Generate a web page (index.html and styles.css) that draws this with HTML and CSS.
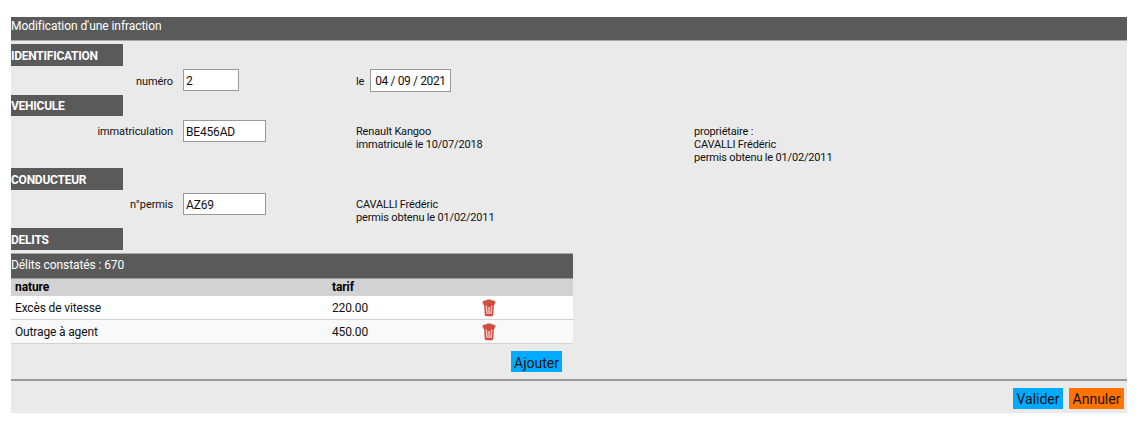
FILE: index.html
```
<!DOCTYPE html>
<html lang="fr">
<head>
<meta charset="utf-8">
<title>Modification d'une infraction</title>
<link rel="stylesheet" href="styles.css">
</head>
<body>
<svg class="defs" width="0" height="0">
  <symbol id="trash" viewBox="0 0 14 18">
    <path d="M1.500 4h11v2h-.6l-.6 9.500q-.1 1.700-1.600 1.700H4.300q-1.500 0-1.600-1.700L2.100 6h-.6z" fill="#d8493c"/>
    <path d="M4.400 1.200Q4.800.4 6 .4h2q1.200 0 1.600.8l2.700.5q1.100.3 1.300 2.700H.4Q.6 2 1.700 1.700z" fill="#c8553f"/>
    <path d="M4.300 6.500l.7 8.500M7 8v7M9.700 6.500L9 15" stroke="#f6d5d2" stroke-width="1.300" fill="none"/>
  </symbol>
</svg>
<form class="panel">
  <header class="title">Modification d'une infraction</header>

  <h2 class="section">IDENTIFICATION</h2>
  <div class="row row-id">
    <label class="label">numéro</label>
    <div class="cell"><span class="input short">2</span></div>
    <div class="info date-cell"><span>le</span><span class="input date">04 / 09 / 2021</span></div>
  </div>

  <h2 class="section section-car">VEHICULE</h2>
  <div class="row row-car">
    <label class="label">immatriculation</label>
    <div class="cell"><span class="input">BE456AD</span></div>
    <div class="info">Renault Kangoo<br>immatriculé le 10/07/2018</div>
    <div class="info">propriétaire :<br>CAVALLI Frédéric<br>permis obtenu le 01/02/2011</div>
  </div>

  <h2 class="section">CONDUCTEUR</h2>
  <div class="row row-driver">
    <label class="label">n°permis</label>
    <div class="cell"><span class="input">AZ69</span></div>
    <div class="info">CAVALLI Frédéric<br>permis obtenu le 01/02/2011</div>
  </div>

  <h2 class="section">DELITS</h2>
  <div class="offences">
    <div class="caption">Délits constatés : 670</div>
    <div class="line head"><span>nature</span><span>tarif</span></div>
    <div class="line"><span>Excès de vitesse</span><span>220.00</span><svg class="trash"><use href="#trash"/></svg></div>
    <div class="line alt"><span>Outrage à agent</span><span>450.00</span><svg class="trash"><use href="#trash"/></svg></div>
    <div class="add"><span class="button">Ajouter</span></div>
  </div>

  <footer class="actions"><span class="button validate">Valider</span><span class="button cancel">Annuler</span></footer>
</form>
</body>
</html>
```
FILE: styles.css
```
* { box-sizing: border-box; }
body {
  margin: 0;
  padding: 17px 18px 0 11px;
  background: #fff;
  color: #111;
  font-family: Roboto, "Liberation Sans", sans-serif;
  font-size: 11px;
  letter-spacing: -0.17px;
}
.defs { display: block; height: 0; }
.panel { height: 396px; background: #eaeaea; }
.title {
  height: 24px;
  margin-bottom: 3px;
  border-bottom: 1px solid #aaa;
  background: #5a5a5a;
  color: #fff;
  font-size: 12px;
  letter-spacing: -0.06px;
  line-height: 18px;
}
.section {
  width: 112px;
  height: 22px;
  margin: 0;
  background: #5a5a5a;
  color: #fff;
  font-size: 12px;
  font-weight: 700;
  letter-spacing: -0.25px;
  line-height: 24px;
}
.section-car { height: 21px; line-height: 22px; }
.row {
  display: grid;
  grid-template-columns: 162px 183px 338px 1fr;
  padding-top: 3px;
}
.row-id { height: 29px; }
.row-car { height: 52px; padding-top: 4px; }
.row-driver { height: 38px; }
.label { text-align: right; line-height: 25px; letter-spacing: -0.1px; }
.row-car .label, .row-driver .label { line-height: 24px; }
.cell { padding-left: 10px; }
.info { padding-top: 5px; line-height: 13px; }
.date-cell { display: flex; gap: 6px; padding-top: 0; line-height: 26px; }
.input {
  display: block;
  width: 83px;
  height: 22px;
  padding-left: 2px;
  border: 1px solid #999;
  background: #fff;
  font-size: 12px;
  line-height: 22px;
  white-space: nowrap;
}
.short { width: 56px; line-height: 23px; }
.date { width: 81px; height: 23px; padding-left: 4px; letter-spacing: -0.38px; line-height: 23px; }
.offences { width: 562px; height: 129px; padding-top: 3px; }
.caption {
  height: 26px;
  border-top: 1px solid #aaa;
  border-bottom: 1px solid #999;
  background: #5a5a5a;
  color: #fff;
  font-size: 12px;
  letter-spacing: -0.09px;
  line-height: 22px;
}
.line {
  display: grid;
  grid-template-columns: 317px 150px 1fr;
  height: 24px;
  padding-left: 4px;
  border-bottom: 1px solid #d2d2d2;
  background: #fff;
  font-size: 12px;
  letter-spacing: -0.15px;
  line-height: 24px;
}
.head {
  height: 17px;
  border: 0;
  background: #d2d2d2;
  color: #000;
  font-weight: 700;
  letter-spacing: -0.1px;
  line-height: 17px;
}
.alt { background: #f9f9f9; }
.trash { width: 14px; height: 18px; margin-top: 3px; }
.add { display: flex; justify-content: flex-end; padding: 7px 11px 0 0; }
.button {
  width: 51px;
  height: 21px;
  background: #00aaff;
  color: #111;
  font-size: 14px;
  letter-spacing: 0;
  line-height: 24px;
  text-align: center;
}
.actions {
  display: flex;
  justify-content: flex-end;
  gap: 6px;
  height: 34px;
  padding: 7px 3px 0 0;
  border-top: 2px solid #999;
}
.actions .button { line-height: 23px; }
.validate { width: 50px; }
.cancel { width: 55px; background: #ff7300; }
```
